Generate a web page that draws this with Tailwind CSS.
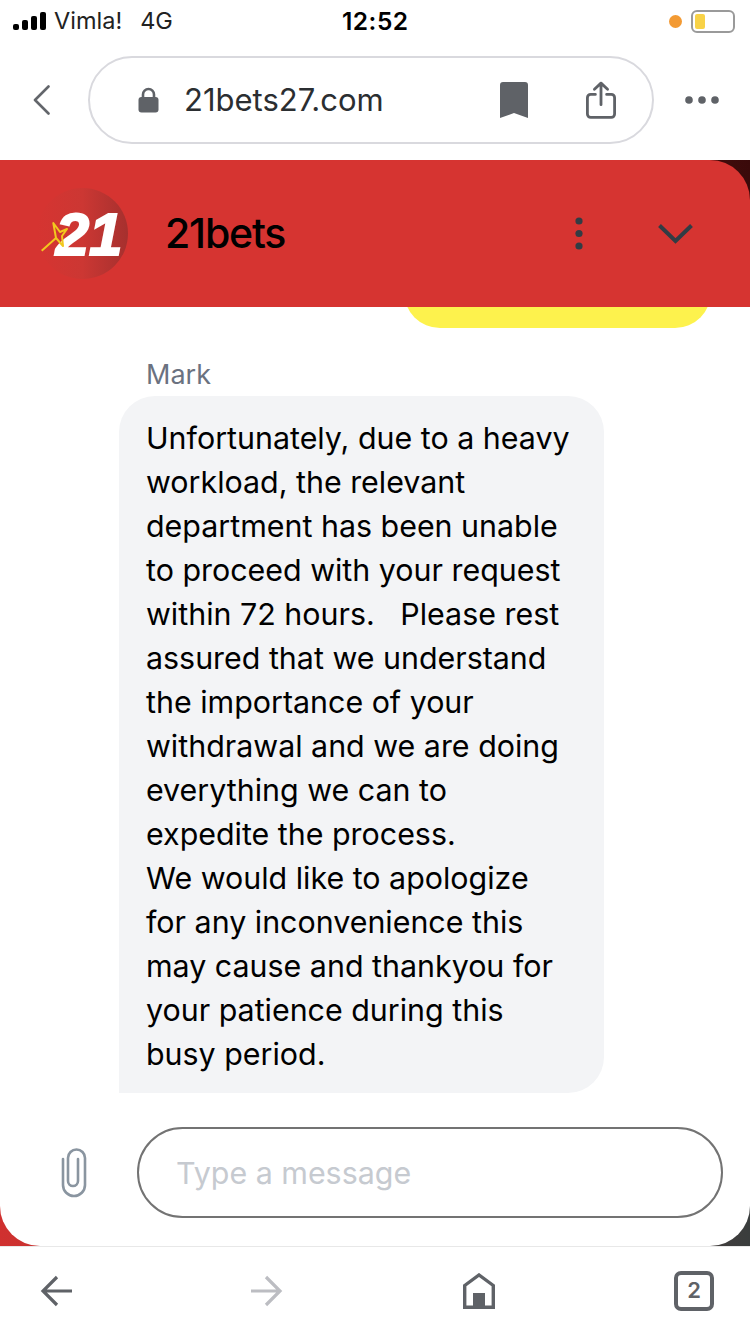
<!DOCTYPE html>
<html lang="en">
<head>
    <meta charset="UTF-8">
    <meta name="viewport" content="width=device-width, initial-scale=1.0">
    <title>21bets chat</title>
    <script src="https://cdn.jsdelivr.net/npm/@tailwindcss/browser@4"></script>
</head>
<body class="bg-white font-['Inter',sans-serif]">
    <div class="w-[750px] h-[1334px] overflow-hidden flex flex-col">
        <!-- status bar -->
        <div class="h-[42px] shrink-0 relative flex items-center pl-[13px] pr-[15px] text-black">
            <svg width="33" height="18" viewBox="0 0 33 18" fill="#000">
                <rect x="0" y="12" width="6" height="6" rx="2"/>
                <rect x="9" y="8" width="6" height="10" rx="2"/>
                <rect x="18" y="4" width="6" height="14" rx="2"/>
                <rect x="27" y="0" width="6" height="18" rx="2"/>
            </svg>
            <span class="ml-[8px] text-[23.500px] text-[#222]">Vimla!</span>
            <span class="ml-[18px] text-[23.500px] text-[#222]">4G</span>
            <span class="absolute left-[342px] top-[6px] text-[24.500px] leading-[30px] font-semibold tracking-[0.5px]">12:52</span>
            <span class="ml-auto w-[13px] h-[13px] rounded-full bg-[#f39a33]"></span>
            <div class="ml-[9px] w-[44px] h-[23px] rounded-[6px] border-2 border-[#9a9a9a] p-[2px] flex">
                <div class="w-[10px] rounded-[2px] bg-[#f8d247]"></div>
            </div>
        </div>

        <!-- address bar -->
        <div class="h-[118px] pb-[2px] shrink-0 flex items-center pl-[33px]">
            <svg width="17" height="30" viewBox="0 0 17 30" fill="none" stroke="#63666b" stroke-width="2.6" stroke-linecap="round" stroke-linejoin="round">
                <path d="M15.500 1.500 L2 15 L15.500 28.500"/>
            </svg>
            <div class="ml-[38px] w-[566px] h-[88px] rounded-full border-2 border-[#d9d9de] flex items-center pl-[48px]">
                <svg width="21" height="26" viewBox="0 0 21 26" fill="#5f6267">
                    <path d="M5 11 V7.500 a5.500 5.500 0 0 1 11 0 V11" fill="none" stroke="#5f6267" stroke-width="2.600"/>
                    <rect x="0.500" y="10" width="20" height="15.500" rx="3"/>
                </svg>
                <span class="ml-[25px] text-[31px] text-[#2b2e31]">21bets27.com</span>
                <svg class="ml-auto" width="28" height="36" viewBox="0 0 28 36" fill="#5f6267">
                    <path d="M3 0 H25 a3 3 0 0 1 3 3 V36 L14 31 L0 36 V3 a3 3 0 0 1 3 -3 Z"/>
                </svg>
                <svg class="ml-[58px] mr-[36px]" width="30" height="40" viewBox="0 0 32 40" fill="none" stroke="#5f6267" stroke-width="3" stroke-linecap="round" stroke-linejoin="round">
                    <path d="M10 14 H5 a3.500 3.500 0 0 0 -3.500 3.500 V35 a3.500 3.500 0 0 0 3.500 3.500 H27 a3.500 3.500 0 0 0 3.500 -3.500 V17.500 a3.500 3.500 0 0 0 -3.500 -3.500 H22"/>
                    <path d="M16 25 V2 M9 8.500 L16 2 L23 8.500"/>
                </svg>
            </div>
            <svg class="ml-[31px]" width="34" height="8" viewBox="0 0 34 8" fill="#5f6267">
                <circle cx="4" cy="4" r="3.800"/>
                <circle cx="17" cy="4" r="3.800"/>
                <circle cx="30" cy="4" r="3.800"/>
            </svg>
        </div>

        <!-- chat widget -->
        <div class="h-[1086px] shrink-0 relative flex flex-col bg-gradient-to-r from-[#d0302f] to-[#3a3d3d]">
            <div class="shrink-0 bg-gradient-to-r from-[#d63431] to-[#3a0a0a]">
                <div class="h-[147px] rounded-tr-[40px] bg-[#d63431] flex items-center pl-[37px] relative z-10">
                    <div class="w-[91px] h-[91px] rounded-full bg-gradient-to-r from-[#d63431] via-[#cc3733] to-[#a6302e] relative flex items-center justify-center">
                        <span class="ml-[13px] mt-[2px] font-['Liberation_Sans',sans-serif] font-bold italic text-[60px] leading-none text-white [-webkit-text-stroke:2px_white] relative">21</span>
                        <svg class="absolute left-0 top-0" width="91" height="91" viewBox="0 0 91 91" fill="none" stroke="#f2c81e" stroke-width="2" stroke-linejoin="round">
                            <path d="M4.700 62.700 L19 50 L16.300 35 L23 44 L30 41 L25 48 L26 58 L19 50"/>
                        </svg>
                    </div>
                    <span class="ml-[37px] text-[41px] font-medium tracking-[-1.200px] text-black">21bets</span>
                    <svg class="ml-auto" width="8" height="33" viewBox="0 0 8 33" fill="#323c44">
                        <circle cx="4" cy="4" r="3.600"/>
                        <circle cx="4" cy="16.500" r="3.600"/>
                        <circle cx="4" cy="29" r="3.600"/>
                    </svg>
                    <svg class="ml-[75px] mr-[57px]" width="35" height="20" viewBox="0 0 35 20" fill="none" stroke="#323c44" stroke-width="4">
                        <path d="M1.500 1.500 L17.500 17 L33.500 1.500"/>
                    </svg>
                </div>
            </div>

            <div class="flex-1 min-h-0 bg-white rounded-b-[40px] flex flex-col">
                <!-- previous message, mostly scrolled under the header -->
                <div class="h-[89px] -mt-[68px] w-[307px] ml-[404px] bg-[#fdf24d] rounded-[36px] shrink-0"></div>
                <div class="mt-[29px] ml-[146px] text-[27px] leading-[36px] text-[#6b7280]">Mark</div>
                <div class="mt-[3px] ml-[119px] w-[485px] bg-[#f3f4f6] rounded-[36px] rounded-bl-none pl-[27px] pr-[10px] pt-[20px] pb-[17px] text-[30.400px] leading-[44px] text-black">
                    <div>Unfortunately, due to a heavy</div>
                    <div>workload, the relevant</div>
                    <div>department has been unable</div>
                    <div>to proceed with your request</div>
                    <div class="whitespace-pre">within 72 hours.   Please rest</div>
                    <div>assured that we understand</div>
                    <div>the importance of your</div>
                    <div>withdrawal and we are doing</div>
                    <div>everything we can to</div>
                    <div>expedite the process.</div>
                    <div>We would like to apologize</div>
                    <div>for any inconvenience this</div>
                    <div>may cause and thankyou for</div>
                    <div>your patience during this</div>
                    <div>busy period.</div>
                </div>
                <div class="mt-[34px] flex items-center pl-[61px]">
                    <svg width="26" height="50" viewBox="0 0 26 50" fill="none" stroke="#8a95a0" stroke-width="2.600" stroke-linecap="round">
                        <path d="M2 11 V37 a11 11 0 0 0 22 0 V10 a8.500 8.500 0 0 0 -17 0 V33 a5 5 0 0 0 10 0 V11"/>
                    </svg>
                    <input class="ml-[50px] w-[586px] h-[91px] rounded-full border-2 border-[#737373] pl-[37px] text-[30.400px] text-black outline-none placeholder:text-[#c6cad0]" placeholder="Type a message">
                </div>
            </div>
        </div>

        <!-- browser toolbar -->
        <div class="h-[88px] shrink-0 border-t border-[#e8e8e8] flex items-center justify-between pl-[40px] pr-[36px]">
            <svg width="32" height="32" viewBox="0 0 32 32" fill="none" stroke="#5f6267" stroke-width="3.200">
                <path d="M32 16 H3 M17 2 L3 16 L17 30"/>
            </svg>
            <svg width="32" height="32" viewBox="0 0 32 32" fill="none" stroke="#bcbdc2" stroke-width="3.200">
                <path d="M0 16 H29 M15 2 L29 16 L15 30"/>
            </svg>
            <svg width="32" height="36" viewBox="0 0 32 36" fill="none" stroke="#5f6267" stroke-width="3.400">
                <path d="M1.700 34.300 V12.500 L16 2 L30.300 12.500 V34.300 Z"/>
                <rect x="10" y="20" width="12" height="15" fill="#5f6267" stroke="none"/>
            </svg>
            <div class="w-[40px] h-[40px] rounded-[7px] border-[4px] border-[#5f6267] flex items-center justify-center text-[22px] font-semibold text-[#5f6267]">2</div>
        </div>
    </div>
</body>
</html>
